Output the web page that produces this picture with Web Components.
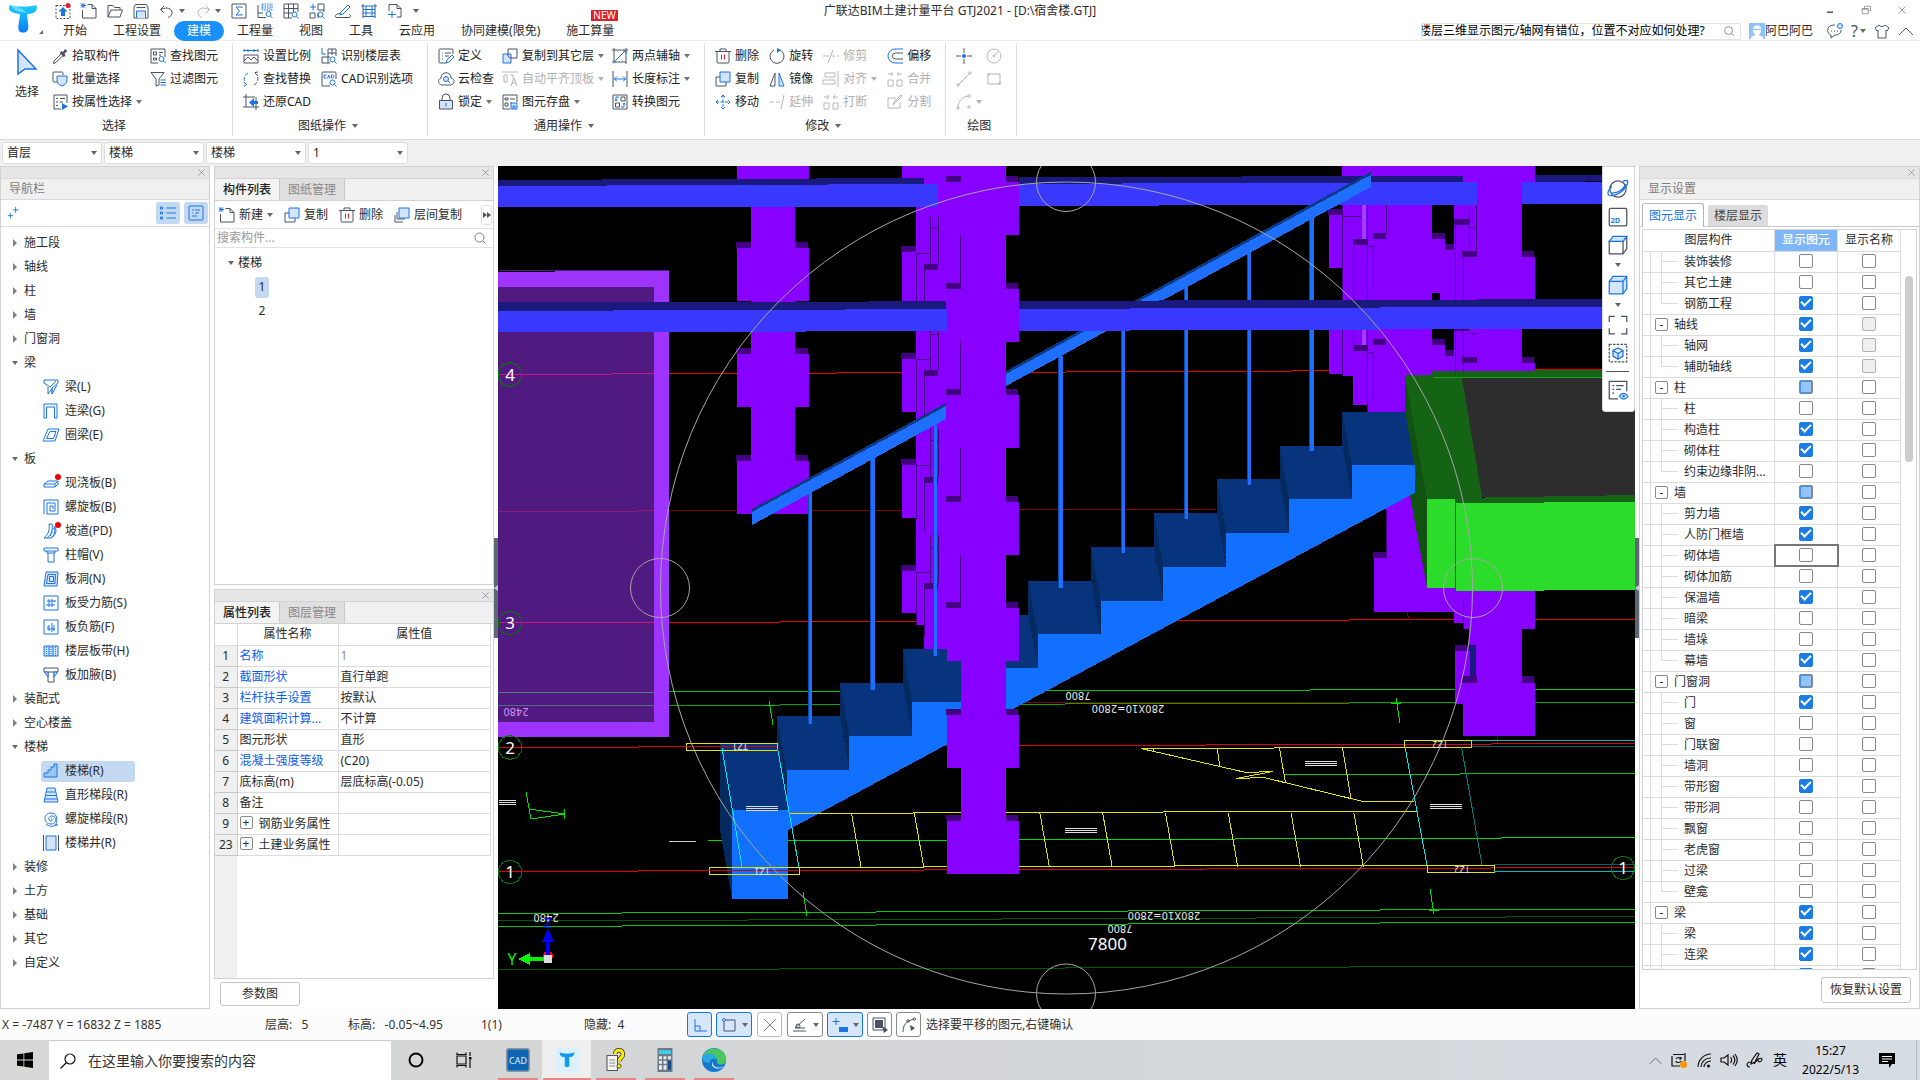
<!DOCTYPE html>
<html lang="zh-CN">
<head>
<meta charset="utf-8">
<title>广联达BIM土建计量平台 GTJ2021</title>
<style>
  html, body { height: 100%; }
  body {
    margin: 0;
    overflow: hidden;
    background: #fff;
    color: #2b2b2b;
    font: 12px/16px "Noto Sans", "Noto Sans CJK SC", sans-serif;
  }
</style>
</head>
<body>
<gtj-app></gtj-app>

<script>
// shared button / reset rules, every shadow root starts with these
const RESET = `
  * { box-sizing: border-box; }
  button, input, select { font: inherit; color: inherit; margin: 0; padding: 0; border: 0; background: none; outline: 0; }
  button { display: inline-flex; align-items: center; justify-content: center; white-space: nowrap; }
`;

// 16x16 icons: k = dark stroke, b = blue stroke, f = light fill, B = solid blue, K = solid dark
const ICONS = {
  upload: '<path class="k" stroke-dasharray="2 1.500" d="M1 2.500h14v13H1z"/><path class="B" d="M8 4l4.500 4.500H10V13H6V8.500H3.500z"/><circle cx="13" cy="2.500" r="2.500" fill="#e0202a"/>',
  newdoc: '<path class="k" d="M6.500 1.500H11l4 4v9.500H1.500V7"/><path class="k" d="M11 1.500v4h4"/><path class="b" d="M0 .500l4 4M4 .500l-4 4M2 0v5M0 2.500h5"/>',
  open: '<path class="k" d="M1 14V2.500h5l1.500 2H13V7M1 14l3-7h11.500L13 14z"/>',
  save: '<path class="k" d="M2.500 1.500h11L15 4v11H1V4zM3.500 4.500h9"/><path class="b f" d="M3.500 15V8h9v7"/>',
  undo: '<path class="k" d="M5 3L1.500 6.500L5 10M2 6.500c6-3 11-1 11 3 0 2-1 4-4 5"/>',
  redo: '<path class="g" d="M11 3l3.500 3.500L11 10M14 6.500c-6-3-11-1-11 3 0 2 1 4 4 5"/>',
  sigma: '<path class="k" d="M1 1h14v14H1z"/><path class="b" d="M11 5V4H5l3.500 4L5 12h6v-1"/>',
  tableFind: '<path class="k" d="M1 2v12.500h8M1 10h5"/><path class="b" stroke-dasharray="1.500 1" d="M5 1h10v6H5zM5 3h10M5 5h10"/><circle class="b" cx="11.500" cy="11" r="2.500"/><path class="b" d="M13.500 13l2 2"/>',
  gridFind: '<path class="k" d="M1 1h14v8M1 1v14h8M5.500 1v14M10.500 1v8M1 5.500h14M1 10h8"/><circle class="b" cx="11.500" cy="11.500" r="2.500"/><path class="b" d="M13.500 13.500l2 2"/>',
  partFind: '<path class="k" d="M9 1h6v8M9 1v6h6M1 10v5h5v-5zM9 10v5"/><path class="b" d="M1 4h6M4 1v6"/><circle class="b" cx="11.500" cy="11.500" r="2.500"/><path class="b" d="M13.500 13.500l2 2"/>',
  pencil: '<path class="k" d="M1 14.500h13c2 0 2-3 0-3M1 14.500c-2-2 1-4 4-4"/><path class="b" d="M5 12l1-3 7-7 2 2-7 7z"/>',
  ladder: '<path class="k" d="M2 1v14M14 1v14"/><path class="b" d="M0 3h16M2 6.500h12M2 10h12M2 13.500h12M5 3v11M11 3v11"/>',
  docPlus: '<path class="k" d="M2 8V1.500h8l4 4V14h-4M10 1.500v4h4"/><path class="b" d="M5 8v7M1 11.500h8"/>',
  dropper: '<path class="K" d="M9 3l2 1 2-3 2.500 2-3 2.500L13.500 8l-2 1L8 5z"/><path class="k" d="M9 6l-7 7-.500 2.500 2.500-1 7-7"/>',
  batch: '<path class="k" d="M5 11H2a1 1 0 0 1-1-1V2a1 1 0 0 1 1-1h8a1 1 0 0 1 1 1v2"/><path class="b f" d="M5 5h10v4c0 3-2 5-5 6-3-1-5-3-5-6z"/>',
  propSelect: '<path class="k" d="M9 15H2V1h13v8M4 4.500h2M8 4.500h5M4 8h2M8 8h3M4 11.500h2"/><path class="B" d="M10 9l6 3.500-6 3.500z"/>',
  findElem: '<path class="k" d="M8 15H1V1h14v8M3.500 4h3v3h-3zM3.500 10h3v2h-3zM9 4.500h4M9 7h2"/><circle class="b" cx="11.500" cy="11" r="2.500"/><path class="b" d="M13.500 13l2 2"/>',
  filter: '<path class="k" d="M1 1.500h13L9 8v6l-3 1V8z"/><path class="b" d="M10.500 9H16M10.500 11.500H16M10.500 14H16"/>',
  scale: '<path class="b" d="M1 2.500h14M1 1v3M15 1v3M5 1v3M11 1v3"/><path class="k" d="M1 7h14v8H1zM1 13l4-4 3 3 3-3 4 4"/>',
  replace: '<path class="b" stroke-dasharray="4 1.500" d="M5 2c-5 3-5 9-1 12M1 11l3 3.500L1 15"/><path class="k" stroke-dasharray="4 1.500" d="M11 14c5-3 5-9 1-12M15 1l-3 .500L15 5"/>',
  restore: '<path class="k" d="M0 3h12M3 0v13M0 13h16M13 3v13"/><path class="B" d="M11 4v3h4v3h-4v3L6 8.500z"/>',
  floorTable: '<path class="b" d="M1 0v6h4"/><path class="k" d="M7 1h8v7M7 1v14M1 15h8M1 9v6M1 9h8M11 1v6M7 5h8"/><circle class="b" cx="11.500" cy="11.500" r="2.500"/><path class="b" d="M13.500 13.500l2 2"/>',
  cadOpt: '<path class="k" d="M15 8V2a1 1 0 0 0-1-1H2a1 1 0 0 0-1 1v13h8"/><path class="b" d="M5.500 4H3v3h2.500M6.500 7.500l1.300-3.500 1.200 3.500M10.500 4v3h1c2 0 2-3 0-3z"/><circle class="b" cx="11.500" cy="11.500" r="2.500"/><path class="b" d="M13.500 13.500l2 2"/>',
  define: '<path class="k" d="M8 15H2a1 1 0 0 1-1-1V2a1 1 0 0 1 1-1h12a1 1 0 0 1 1 1v4M4 5h1M7 5h6M4 8h1M7 8h4M4 11h1"/><path class="b" d="M8 15l1-3 5-5 2 2-5 5z"/>',
  cloudCheck: '<path class="k" d="M4 14c-5-1-4-6-1-7C3 0 13 0 13 7c4 1 4 6 0 7z"/><circle class="b f" cx="8" cy="8" r="2.500"/><path class="b" d="M10 10l2 2"/>',
  lock: '<path class="k" d="M4 6V4a4 4 0 0 1 8 0v2"/><path class="k f" d="M1.500 6.500h13V15h-13z"/><path class="b" d="M8 9v3.500"/>',
  copyFloor: '<path class="b f" d="M1 6h8v9H1z"/><path class="k" fill="#fff" d="M6 1h9v9H8L6 8z"/>',
  alignTop: '<path class="g" d="M0 1h16M2 4h3v7H2zM8 4h3v4M9 15l3-8 3 8M10 12h4"/>',
  saveElem: '<path class="k" d="M8 15H1V1h14v7M3 4h3v2H3zM8 5h5M3 9h3v3H3zM8 9h2"/><path class="b f" d="M9 9h6v6H9zM11 15v-3h2v3"/>',
  twoPoint: '<path class="k" d="M0 2h16M2 0v14M0 14h14M14 0v16"/><path class="b" d="M3 13L13 3M2 15.500l2-2M11 3h3v3"/>',
  dimension: '<path class="k" d="M1 0v16M15 0v16"/><path class="b" d="M2 8h12M5 5.500L2.500 8 5 10.500M11 5.500L13.500 8 11 10.500"/>',
  convert: '<path class="k" d="M1 1h14v14H1zM3.500 9h4v4h-4zM9 3h4v4H9z"/><path class="b" d="M7 3H4v4M3 5.500L4 7l1.500-1.500M9 13h3V9M11 10.500L12 9l1.500 1.500"/>',
  trash: '<path class="k" d="M0 3.500h16M5 3V1h6v2M2 3.500V14a1 1 0 0 0 1 1h10a1 1 0 0 0 1-1V3.500"/><path class="r" d="M6.500 6.500v5M9.500 6.500v5"/>',
  copy: '<path class="k" d="M11 11v4H1V6h4"/><path class="b f" d="M5 1h10v10H5z"/>',
  move: '<path class="b" stroke-dasharray="3 1.500" d="M8 1v14M1 8h14"/><path class="b" d="M6 3l2-2 2 2M6 13l2 2 2-2M3 6L1 8l2 2M13 6l2 2-2 2"/>',
  rotate: '<path class="k" d="M5 2a7 7 0 1 0 6 0"/><path class="B" d="M8 0l4 2-4 3z"/>',
  mirror: '<path class="k" d="M6 2v13H1z"/><path class="b f" d="M10 2v13h5z"/>',
  trim: '<path class="g" d="M0 8h6M10 2L5 15M9 8h3M14 8h2"/>',
  extend: '<path class="g" d="M0 8h5M7 8h4M15 1l-3 14"/>',
  align: '<path class="g" d="M15 0v16M2 2h10v4H2zM0 9h12v4H0z"/>',
  breakUp: '<path class="g" d="M1 9h5v6H1zM10 9h5v6h-5zM1 3h5M4 1l2 2-2 2M15 3h-5M12 1l-2 2 2 2"/>',
  offset: '<path class="b" d="M16 1H8a6.500 6.500 0 0 0 0 14h8"/><path class="k" d="M16 5H8.500a3 3 0 0 0 0 6H16"/>',
  merge: '<path class="g" d="M1 9h5v6H1zM10 9h5v6h-5zM1 3h4M5 1v4M15 3h-4M11 1v4"/>',
  split: '<path class="g" d="M9 4H1v10h12V9M6 11l1-3 7-7 1 1-7 7z"/>',
  point: '<path class="k" d="M8 0v5M8 11v5M0 8h5M11 8h5"/><circle class="B" cx="8" cy="8" r="2"/>',
  circle: '<circle class="g" cx="8" cy="8" r="7"/><path class="g" d="M8 8l4-4"/><circle class="g" cx="8" cy="8" r="1"/>',
  line: '<path class="g" d="M2 14L14 2"/><circle class="g" cx="2" cy="14" r="1.200"/><circle class="g" cx="14" cy="2" r="1.200"/>',
  rect: '<path class="g" d="M2 3h12v10H2z"/><circle class="g" cx="2.500" cy="3.500" r="1"/><circle class="g" cx="13.500" cy="12.500" r="1"/>',
  arc: '<path class="g" d="M2 14C2 7 6 3 12 2"/><circle class="g" cx="2" cy="14" r="1.200"/><circle class="g" cx="13" cy="2" r="1.200"/><circle class="g" cx="13" cy="13" r="1.200"/>',
  search: '<circle class="n" cx="7.500" cy="7.500" r="4.500"/><path class="n" d="M11 11l2.500 2.500"/>',
  chat: '<path class="k" d="M8 2C2 2 0 5 1 9c1 2 2 3 3 3v3l4-3c4 0 6-2 6-5"/><path class="k" d="M4 8h1M7 8h1M10 8h1"/><circle class="b f" cx="13" cy="3" r="2.500"/>',
  shirt: '<path class="k" d="M5 2L1 5l2 3 1-1v8h8V7l1 1 2-3-4-3C10 4 6 4 5 2z"/>',
  up: '<path class="k" d="M1 12l7-7 7 7"/>',
  close: '<path class="n" d="M3.500 3.500l9 9M12.500 3.500l-9 9"/>',
  min: '<path class="w" d="M4 11h8"/>',
  max: '<path class="n" d="M6 6V3h8v6h-3M3 6h8v7H3zM3 7h8"/>',
  plus: '<path class="b" d="M11 1v7M7.500 4.500h7M5 8v6M2 11h6"/>',
  listView: '<path class="b" d="M6.500 3H16M6.500 8H16M6.500 13H16M.500 2h2v2h-2zM.500 7h2v2h-2zM.500 12h2v2h-2z"/>',
  cardView: '<path class="b" d="M2 1h12a1 1 0 0 1 1 1v12a1 1 0 0 1-1 1H2a1 1 0 0 1-1-1V2a1 1 0 0 1 1-1zM4 5h2M7 5h5M4 8h1M7 8h4M4 11h5"/>',
  floorCopy: '<path class="k" d="M3 5v7h8M1 8v7h8"/><path class="b f" d="M5 1h10v10H5z"/>',
  beam: '<path class="b" d="M1 1h14v3L9 9v6M1 1v3l6 4 6-6M5 8v7M9 9v6l5-9M5 15l3-4"/>',
  linkBeam: '<path class="b" d="M1 15V1h13v14h-2.500V4h-8v11z"/>',
  ringBeam: '<path class="b" d="M5 2h11l-4 12H0zM7 4.500h6L10.500 11.500H3.500z"/>',
  slab: '<path class="b" d="M1 9l4-3h10v3l-3 3H1zM1 9h11l3-3M12 9v3"/><circle cx="15" cy="2" r="3" fill="#f00000"/>',
  spiralSlab: '<path class="b" d="M1 1h14v14H4M1 1v14M4 15V4h8v8H7V7h3v3"/>',
  ramp: '<path class="b" d="M6 1h3c1 6-1 12-5 14H1c4-3 6-8 5-14zM11 3c2 5 0 10-3 12H4M12 4c2 4 1 8-4 11"/><path class="b" stroke-dasharray="2 1.500" d="M10 5c0 4-1 6-4 9"/><circle cx="15" cy="2" r="3" fill="#f00000"/>',
  cap: '<path class="b" d="M1 1h14v3H1zM4 4v2h8V4M5 6v9h6V6"/>',
  hole: '<path class="b f" d="M3 1h12l-1 14H1zM5 3.500h7.500L12 12.500H3.500zM6.500 5.500h4v5h-4z"/>',
  rebarS: '<path class="b" d="M1 1h14v14H1zM4 6h8M3 10h9M6 4v8M9 4v8M12 5v2"/>',
  rebarF: '<path class="b" d="M1 1h14v14H1zM4 10h8M6 6v6M9 4v9M11 6v6M4 8h2"/>',
  strip: '<path class="b f" d="M1 3h14v10H1z"/><path class="b" d="M6 3v10M10 3v10"/><path class="b" stroke-dasharray="1 1" d="M3.500 4v9M8 4v9M12.500 4v9"/>',
  haunch: '<path class="k" d="M1 1h14v4H1zM5 5v10h6V5"/><path class="b f" d="M1.500 5H5v5zM14.500 5H11v5z"/>',
  stair: '<path class="b s" d="M1 14v-4h4V7h3V4h3V1h3v13z"/>',
  ladderStair: '<path class="b f" d="M4 1h8l3 14H1zM3.500 5h9M3 8.500h10M2 12h12"/>',
  spiral: '<path class="b" d="M8 8c1-1 2 1 0 2-3 0-3-5 1-5 5 0 5 8-1 8C0 13 0 2 8 2c7 0 7 9 4 12h3M3 13c3 3 8 3 11 0"/>',
  well: '<path class="k" d="M.500 0v16M15.500 0v16"/><path class="b f" d="M3 1h10v14H3z"/>',
  orbit: '<circle class="k" cx="8" cy="8" r="6.500"/><path class="b" d="M3 6C0 9-1 12 1 13c3 1 8-1 11-4s5-7 3-8c-1 0-2 0-3 1M14 4c-1 4-7 8-11 7"/>',
  view2d: '<rect class="k" x="1" y="1" width="14" height="14" rx="1"/><text x="2" y="13" font-size="6" font-weight="700" fill="#1e7be0">2D</text>',
  cubeTop: '<path class="k" d="M1 5h11v10H1zM12 15l3-4V1M12 5l3-4"/><path class="b f" d="M1 5l3-4h11l-3 4z"/>',
  cube: '<path class="b f" d="M1 5l3-4h11v10l-3 4H1zM1 5h11v10M12 5l3-4"/>',
  fit: '<path class="k" d="M5.500 1H1v4.500M10.500 1H15v4.500M5.500 15H1v-4.500M10.500 15H15v-4.500"/>',
  isolate: '<path class="k" stroke-dasharray="2 1" d="M1 1h14v14H1z"/><path class="b f" d="M8 4l4 2v4.500L8 13l-4-2.500V6zM4 6l4 2.500L12 6M8 8.500V13"/>',
  listEye: '<path class="k" d="M8 15H1V1h14v8M3.500 4.500H5M6.500 4.500h6M3.500 7.500H5M6.500 7.500h4M3.500 10.500H5"/><path class="b f" d="M9 13c2-3 5-3 7 0-2 3-5 3-7 0z"/><circle class="B" cx="12.500" cy="13" r="1"/>',
  ortho: '<path class="b" d="M3 2v12h12M3 9h5v5"/>',
  snap: '<path class="k" d="M4 3h10v11H3V5"/><circle class="b f" cx="3" cy="3" r="1.500"/>',
  cross: '<path class="n" d="M2 2l12 12M14 2L2 14"/>',
  angle: '<path class="k" d="M13 2L3 11h10M1 14h13"/><circle class="k" cx="6" cy="9" r="2"/>',
  dynamic: '<path class="b" d="M4 1v7M.500 4.500h7"/><path class="B" d="M7 10h9v5H7z"/>',
  select: '<path class="k" d="M1 1h12v12H1z"/><path class="K" d="M3 3h8v8H3zM10 9l6 4-4 3z"/>',
  curve: '<path class="k" d="M2 15C2 8 5 4 13 2"/><circle class="k" cx="7" cy="4" r="1.200"/><circle class="k" cx="13.500" cy="2" r="1.200"/><path class="K" d="M9 8l5 3-4 3z"/>',
  win: '<path fill="#000" d="M0 2.300L6.500 1.400V7.600H0zM7.300 1.300L16 0v7.600H7.300zM0 8.400h6.500v6.200L0 13.700zM7.300 8.400H16V16l-8.700-1.300z"/>',
  find: '<circle class="t" cx="10" cy="6" r="5"/><path class="t" d="M6.500 9.500L.500 15.500"/>',
  cortana: '<circle cx="8" cy="8" r="6.500" fill="none" stroke="#000" stroke-width="2"/>',
  taskview: '<path class="t" d="M1 4h9v8H1zM1 .500v2h9v-2M1 15.500v-2h9v2M14 0v4M14 8v8"/><path fill="#000" d="M13 5h2.500v2.500H13z"/>',
  cad: '<rect width="16" height="16" rx="2" fill="#8c959d"/><rect x="1" y="1" width="14" height="14" rx="1" fill="#0d66b5"/><text x="2" y="10.500" font-size="6" fill="#dfefff">CAD</text>',
  tapp: '<rect width="16" height="16" rx="2" fill="#dcf1ff"/><path fill="#129af0" d="M3 3c3 1 7 1 10 0-.500 3-2 3-3.500 3v6c0 1-3 1-3 0V6C5 6 3.500 6 3 3z"/>',
  help: '<path fill="#f5f5f5" stroke="#555" stroke-width=".700" d="M2 5h7v10H2z"/><path stroke="#888" stroke-width=".800" d="M3.500 8h4M3.500 10h4M3.500 12h4"/><path fill="none" stroke="#333" stroke-width="3" d="M7.500 4c0-4 6-3 5 1-1 2-2.500 2-2.500 4"/><path fill="none" stroke="#ffee00" stroke-width="2" d="M7.500 4c0-4 6-3 5 1-1 2-2.500 2-2.500 4"/><circle cx="10" cy="12" r="1.400" fill="#fe0" stroke="#333" stroke-width=".500"/>',
  calc: '<path fill="#6d7a86" d="M3 0h10v16H3z"/><path fill="#42cdf0" d="M4 1.500h8V4H4z"/><path fill="#e6ebee" d="M4 5.500h2v2H4zM7 5.500h2v2H7zM4 8.500h2v2H4zM7 8.500h2v2H7zM4 11.500h2v3H4zM7 11.500h2v3H7zM10 5.500h2v2h-2z"/><path fill="#134a8e" d="M10 8.500h2v6h-2z"/>',
  edge: '<circle cx="8" cy="8" r="8" fill="#1478cf"/><path fill="#4ac85f" d="M1 5C4-2 16-1 16 8c0 3-4 4-6 2 1-4-3-7-9-5z"/><path fill="#2aa8e0" d="M.500 6C3 2 9 3 9.500 8 7 6 5 8 5 10c-3 0-5-2-4.500-4z"/><path fill="#dcebf5" d="M7 9c0 4 4 5 8 3-3 3-10 2-8-3z"/>',
  update: '<path class="t" d="M2 2.500h11M1 4v10h8M14 1v8"/><path class="t" d="M5 7c1-2 5-2 5 0M10 9c-1 2-5 2-5 0M10 5v2H8"/><circle cx="12.500" cy="12.500" r="3.500" fill="#ff9400"/>',
  wifi: '<path class="t" d="M2 15C2 8 8 2 15 2M5 15c0-5 4-9 10-9M8 15c0-3 3-6 7-6"/><circle cx="12.500" cy="14" r="1.500"/>',
  sound: '<path class="t" d="M0 6h3l4-3v10l-4-3H0zM9.500 5c1.500 2 1.500 4 0 6M12 3.500c2.500 3 2.500 6 0 9M14 2c3 4 3 8 0 12"/>',
  pen: '<path class="t" d="M5 12l1-4 5-7 2 1-4 8zM5 10c-5 0-5 5-1 5M8 12c3-5 7-7 8-5 0 3-4 4-4 1"/>',
  notice: '<path fill="#000" d="M0 1h16v11h-3l-3 4v-4H0z"/><path stroke="#fff" stroke-width="1.200" d="M3 4.500h10M3 7h10M3 9.500h6"/>'
};

class UiIcon extends HTMLElement {
  constructor() {
    super();
    this.attachShadow({ mode: 'open' });
  }
  connectedCallback() {
    this.shadowRoot.innerHTML = `
      <style>
        :host { display: inline-block; flex: none; width: 16px; height: 16px; }
        svg { display: block; width: 100%; height: 100%; overflow: visible; font-family: "Noto Sans", sans-serif; }
        .k, .b, .g, .r, .n, .w, .t { fill: none; stroke-width: 1; }
        .k { stroke: #4b5263; } .b { stroke: #1b74e4; } .g { stroke: #b6b6b6; }
        .r { stroke: #e02020; } .n { stroke: #808080; } .w { stroke: #555; stroke-width: 2; } .t { stroke: #111; stroke-width: 1.2; }
        .f { fill: #d3e4fb; } .s { fill: #9cc6f2; } .B { fill: #1b74e4; } .K { fill: #4b5263; }
      </style>
      <svg viewBox="0 0 16 16" aria-hidden="true">${ICONS[this.getAttribute('name')] || ''}</svg>`;
  }
}
customElements.define('ui-icon', UiIcon);

class UiCaret extends HTMLElement {
  constructor() {
    super();
    this.attachShadow({ mode: 'open' }).innerHTML = `
      <style>
        :host { display: inline-block; flex: none; border: 3px solid transparent; border-top: 4px solid #666; border-bottom: 0; width: 0; height: 0; }
        :host([dir=right]) { border: 4px solid transparent; border-left: 4px solid #808080; border-right: 0; }
      </style>`;
  }
}
customElements.define('ui-caret', UiCaret);

// one ribbon command: icon, text, optional drop arrow
class RbCmd extends HTMLElement {
  constructor() {
    super();
    this.attachShadow({ mode: 'open' });
  }
  connectedCallback() {
    const off = this.hasAttribute('off');
    this.shadowRoot.innerHTML = `
      <style>${RESET}
        :host { display: block; height: 23px; }
        button { height: 23px; gap: 4px; color: ${off ? '#b0b0b0' : '#222'}; }
        ui-caret { opacity: ${off ? .5 : .9}; }
      </style>
      <button type="button"${off ? ' disabled' : ''} aria-label="${this.getAttribute('icon')}">
        <ui-icon name="${this.getAttribute('icon')}"></ui-icon><slot></slot>${this.hasAttribute('drop') ? '<ui-caret></ui-caret>' : ''}
      </button>`;
    if (this.textContent.trim()) this.shadowRoot.querySelector('button').removeAttribute('aria-label');
  }
}
customElements.define('rb-cmd', RbCmd);

class RbGroup extends HTMLElement {
  constructor() {
    super();
    this.attachShadow({ mode: 'open' });
  }
  connectedCallback() {
    this.shadowRoot.innerHTML = `
      <style>
        :host { display: flex; flex-direction: column; padding: 1px 14px 0 10px; border-right: 1px solid #dcdcdc; height: 93px; box-sizing: border-box; }
        .cols { display: flex; gap: var(--gap, 10px); height: 74px; }
        .label { display: flex; justify-content: center; align-items: center; gap: 6px; height: 16px; }
      </style>
      <div class="cols"><slot></slot></div>
      <div class="label">${this.getAttribute('label')}${this.hasAttribute('drop') ? '<ui-caret></ui-caret>' : ''}</div>`;
  }
}
customElements.define('rb-group', RbGroup);

class AppHeader extends HTMLElement {
  constructor() {
    super();
    const qat = ['upload', 'newdoc', 'open', 'save', 'undo*', 'redo*', 'sigma', 'tableFind', 'gridFind', 'partFind', 'pencil', 'ladder', 'docPlus'];
    const tabs = ['开始', '工程设置', '建模', '工程量', '视图', '工具', '云应用', '协同建模(限免)', '施工算量'];
    this.attachShadow({ mode: 'open' }).innerHTML = `
      <style>${RESET}
        :host { display: grid; grid-template: 21px 20px / 50px 1fr auto 1fr 50px; border-bottom: 1px solid #ededed; height: 41px; box-sizing: border-box; background: #fff; }
        .logo { grid-row: 1 / 3; display: flex; align-items: end; padding: 0 0 7px 8px; gap: 1px; }
        .logo svg { width: 30px; height: 30px; }
        .logo i { border-left: 4px solid transparent; border-bottom: 4px solid #666; }
        .qat { display: flex; align-items: center; gap: 10px; padding-left: 5px; }
        .qat button { gap: 4px; }
        .qat ui-caret { width: 0; }
        .title { align-self: center; }
        .win { grid-column: 4 / 6; justify-self: end; display: flex; }
        .win button { width: 36px; height: 20px; }
        .win ui-icon { width: 12px; height: 12px; }
        .row { grid-column: 2 / 6; display: flex; justify-content: space-between; }
        nav { display: flex; }
        nav button { position: relative; padding: 0 13px; height: 20px; }
        nav .on { background: #1890ff; color: #fff; border-radius: 10px; }
        .new { position: absolute; left: 38px; bottom: 20px; padding: 0 2px; background: #e0202a; color: #fff; font-size: 10px; line-height: 11px; }
        .tools { display: flex; align-items: center; gap: 8px; padding-right: 6px; }
        .box { display: flex; align-items: center; width: 320px; height: 17px; border: 1px solid #e2e2e2; border-radius: 2px; padding-right: 4px; }
        .box input { flex: 1; min-width: 0; height: 15px; text-indent: -3px; color: #000; }
        .box ui-icon { width: 14px; height: 14px; }
        .user { display: flex; align-items: center; margin-right: 6px; }
        .user svg { width: 16px; height: 16px; }
        .q { font-size: 16px; gap: 2px; color: #4b5263; }
      </style>
      <div class="logo">
        <svg viewBox="0 0 30 30"><defs><linearGradient id="t" x2="0" y2="1"><stop stop-color="#1ad0fb"/><stop offset="1" stop-color="#0b7df2"/></linearGradient></defs>
          <path fill="url(#t)" d="M2 1c5 2 20 2 26 0 3 6-2 9-9 9 0 5 3 14 0 17-2 2-6 2-8 0-2-4 1-12 1-17C7 9-2 8 2 1z"/>
          <path fill="#9be6ff" opacity=".6" d="M3 1c6 2 12 3 16 8-8-1-13-2-16-8z"/></svg><i></i>
      </div>
      <div class="qat">${qat.map(n => `<button type="button" aria-label="${n.replace('*', '')}"><ui-icon name="${n.replace('*', '')}"></ui-icon>${n.endsWith('*') ? '<ui-caret></ui-caret>' : ''}</button>`).join('')}<ui-caret></ui-caret></div>
      <div class="title">广联达BIM土建计量平台 GTJ2021 - [D:\\宿舍楼.GTJ]</div>
      <div class="win">${['min', 'max', 'close'].map(n => `<button type="button" aria-label="${n}"><ui-icon name="${n}"></ui-icon></button>`).join('')}</div>
      <div class="row">
        <nav>${tabs.map((t, i) => `<button type="button"${i === 2 ? ' class="on"' : ''}>${t}${i === 8 ? '<span class="new">NEW</span>' : ''}</button>`).join('')}</nav>
        <div class="tools">
          <div class="box"><input type="text" aria-label="搜索" value="楼层三维显示图元/轴网有错位，位置不对应如何处理?"><ui-icon name="search"></ui-icon></div>
          <div class="user"><svg viewBox="0 0 16 16"><path fill="#8cc4fb" d="M0 0h16v16H0z"/><path fill="#fff" d="M4 6c0-5 8-5 8 0v1c0 4-2 4-2 5l4 2v2H2v-2l4-2c0-1-2-1-2-5z"/><path stroke="#8cc4fb" d="M3 6.500h10"/></svg>阿巴阿巴</div>
          <ui-icon name="chat"></ui-icon>
          <button type="button" class="q">?<ui-caret></ui-caret></button>
          <ui-icon name="shirt"></ui-icon>
          <ui-icon name="up"></ui-icon>
        </div>
      </div>`;
  }
}
customElements.define('app-header', AppHeader);

class AppRibbon extends HTMLElement {
  constructor() {
    super();
    this.attachShadow({ mode: 'open' }).innerHTML = `
      <style>${RESET}
        :host { display: flex; padding-top: 2px; height: 99px; box-sizing: border-box; border-bottom: 1px solid #d8d8d8; background: #fff; }
        .big { flex-direction: column; width: 34px; gap: 8px; height: 60px; }
        .big svg { width: 22px; height: 28px; }
      </style>
      <rb-group label="选择" style="--gap: 8px">
        <button type="button" class="big"><svg viewBox="0 0 22 28"><path d="M2 2l18 19H9l-7 5z" fill="#d3e4fb" stroke="#1b74e4" stroke-width="1.500"/></svg>选择</button>
        <div><rb-cmd icon="dropper">拾取构件</rb-cmd><rb-cmd icon="batch">批量选择</rb-cmd><rb-cmd icon="propSelect" drop>按属性选择</rb-cmd></div>
        <div><rb-cmd icon="findElem">查找图元</rb-cmd><rb-cmd icon="filter">过滤图元</rb-cmd></div>
      </rb-group>
      <rb-group label="图纸操作" drop>
        <div><rb-cmd icon="scale">设置比例</rb-cmd><rb-cmd icon="replace">查找替换</rb-cmd><rb-cmd icon="restore">还原CAD</rb-cmd></div>
        <div><rb-cmd icon="floorTable">识别楼层表</rb-cmd><rb-cmd icon="cadOpt">CAD识别选项</rb-cmd></div>
      </rb-group>
      <rb-group label="通用操作" drop style="--gap: 8px">
        <div><rb-cmd icon="define">定义</rb-cmd><rb-cmd icon="cloudCheck">云检查</rb-cmd><rb-cmd icon="lock" drop>锁定</rb-cmd></div>
        <div><rb-cmd icon="copyFloor" drop>复制到其它层</rb-cmd><rb-cmd icon="alignTop" drop off>自动平齐顶板</rb-cmd><rb-cmd icon="saveElem" drop>图元存盘</rb-cmd></div>
        <div><rb-cmd icon="twoPoint" drop>两点辅轴</rb-cmd><rb-cmd icon="dimension" drop>长度标注</rb-cmd><rb-cmd icon="convert">转换图元</rb-cmd></div>
      </rb-group>
      <rb-group label="修改" drop>
        <div><rb-cmd icon="trash">删除</rb-cmd><rb-cmd icon="copy">复制</rb-cmd><rb-cmd icon="move">移动</rb-cmd></div>
        <div><rb-cmd icon="rotate">旋转</rb-cmd><rb-cmd icon="mirror">镜像</rb-cmd><rb-cmd icon="extend" off>延伸</rb-cmd></div>
        <div><rb-cmd icon="trim" off>修剪</rb-cmd><rb-cmd icon="align" drop off>对齐</rb-cmd><rb-cmd icon="breakUp" off>打断</rb-cmd></div>
        <div><rb-cmd icon="offset">偏移</rb-cmd><rb-cmd icon="merge" off>合并</rb-cmd><rb-cmd icon="split" off>分割</rb-cmd></div>
      </rb-group>
      <rb-group label="绘图" style="--gap: 4px">
        <div><rb-cmd icon="point"></rb-cmd><rb-cmd icon="line" off></rb-cmd><rb-cmd icon="arc" drop off></rb-cmd></div>
        <div><rb-cmd icon="circle" off></rb-cmd><rb-cmd icon="rect" off></rb-cmd></div>
      </rb-group>`;
  }
}
customElements.define('app-ribbon', AppRibbon);

class FloorBar extends HTMLElement {
  constructor() {
    super();
    const items = [['楼层', '首层'], ['构件大类', '楼梯'], ['构件类型', '楼梯'], ['构件', '1']];
    this.attachShadow({ mode: 'open' }).innerHTML = `
      <style>${RESET}
        :host { display: flex; gap: 2px; padding: 1px 2px; height: 26px; box-sizing: border-box; background: #f0f0f0; }
        label { display: grid; align-items: center; width: 100px; }
        select { grid-area: 1 / 1; appearance: none; width: 100px; height: 22px; padding-left: 4px; background: #fff; border: 1px solid #dcdcdc; border-radius: 3px; }
        ui-caret { grid-area: 1 / 1; justify-self: end; margin-right: 5px; pointer-events: none; }
      </style>
      ${items.map(([n, v]) => `<label><select aria-label="${n}"><option>${v}</option></select><ui-caret></ui-caret></label>`).join('')}`;
  }
}
customElements.define('floor-bar', FloorBar);

// docked panel: grip strip with close button, then heading or tabs
class DockPanel extends HTMLElement {
  constructor() {
    super();
    this.attachShadow({ mode: 'open' });
  }
  connectedCallback() {
    const tabs = (this.getAttribute('tabs') || '').split(',').filter(Boolean);
    const head = tabs.length
      ? `<div class="tabs">${tabs.map((t, i) => `<button type="button"${i ? '' : ' class="on"'}>${t}</button>`).join('')}</div>`
      : `<div class="head">${this.getAttribute('heading')}</div>`;
    this.shadowRoot.innerHTML = `
      <style>${RESET}
        :host { display: flex; flex-direction: column; min-height: 0; box-sizing: border-box; border: 1px solid #d2d2d2; background: #fff; }
        .grip { display: flex; justify-content: end; height: 11px; background: #e6e6e6; padding-right: 2px; }
        .grip button { width: 11px; height: 11px; }
        .grip ui-icon { width: 11px; height: 11px; }
        .head { height: 22px; line-height: 20px; padding-left: 8px; background: #f0f0f0; border: 1px solid #dadada; border-width: 1px 0; color: #7c7c7c; }
        .tabs { display: flex; height: 23px; background: #f0f0f0; border: 1px solid #d2d2d2; border-width: 1px 0; }
        .tabs button { padding: 0 8px; border-right: 1px solid #c8c8c8; background: #dfdfdf; color: #888; }
        .tabs .on { background: #f3f3f3; color: #222; font-weight: 500; }
      </style>
      <div class="grip"><button type="button" aria-label="关闭"><ui-icon name="close"></ui-icon></button></div>
      ${head}
      <slot></slot>`;
  }
}
customElements.define('dock-panel', DockPanel);

class NavTree extends HTMLElement {
  constructor() {
    super();
    const tree = [
      ['施工段'], ['轴线'], ['柱'], ['墙'], ['门窗洞'],
      ['梁', [['beam', '梁(L)'], ['linkBeam', '连梁(G)'], ['ringBeam', '圈梁(E)']]],
      ['板', [['slab', '现浇板(B)'], ['spiralSlab', '螺旋板(B)'], ['ramp', '坡道(PD)'], ['cap', '柱帽(V)'], ['hole', '板洞(N)'],
        ['rebarS', '板受力筋(S)'], ['rebarF', '板负筋(F)'], ['strip', '楼层板带(H)'], ['haunch', '板加腋(B)']]],
      ['装配式'], ['空心楼盖'],
      ['楼梯', [['stair', '楼梯(R)', 1], ['ladderStair', '直形梯段(R)'], ['spiral', '螺旋梯段(R)'], ['well', '楼梯井(R)']]],
      ['装修'], ['土方'], ['基础'], ['其它'], ['自定义']
    ];
    this.attachShadow({ mode: 'open' }).innerHTML = `
      <style>${RESET}
        :host { display: block; flex: 1; min-height: 0; overflow: hidden; }
        .bar { display: flex; align-items: center; gap: 4px; height: 27px; padding: 0 1px 0 5px; border-bottom: 1px solid #dadada; }
        .bar button { width: 24px; height: 22px; border-radius: 3px; background: #c2d9f1; }
        .bar .add { width: 14px; margin-right: auto; background: none; }
        .add ui-icon { width: 14px; height: 14px; }
        ul { list-style: none; margin: 0; padding: 0; }
        .root { padding-top: 4px; }
        .g { display: flex; align-items: center; gap: 6px; height: 24px; padding-left: 11px; }
        .g span { display: flex; justify-content: center; width: 6px; }
        .c { display: flex; align-items: center; height: 24px; padding-left: 40px; }
        .c button { gap: 6px; height: 21px; padding: 0 4px 0 2px; border-radius: 3px; justify-content: start; }
        .c .on { background: #c2d9f1; width: 94px; }
      </style>
      <div class="bar"><button type="button" class="add" aria-label="添加"><ui-icon name="plus"></ui-icon></button>
        <button type="button" aria-label="列表"><ui-icon name="listView"></ui-icon></button><button type="button" aria-label="卡片"><ui-icon name="cardView"></ui-icon></button></div>
      <ul class="root">${tree.map(([name, kids]) => `
        <li><div class="g"><span><ui-caret${kids ? '' : ' dir="right"'}></ui-caret></span>${name}</div>
        ${kids ? `<ul>${kids.map(([ic, t, on]) => `<li class="c"><button type="button"${on ? ' class="on"' : ''}><ui-icon name="${ic}"></ui-icon>${t}</button></li>`).join('')}</ul>` : ''}</li>`).join('')}
      </ul>`;
  }
}
customElements.define('nav-tree', NavTree);

class MemberList extends HTMLElement {
  constructor() {
    super();
    this.attachShadow({ mode: 'open' }).innerHTML = `
      <style>${RESET}
        :host { display: block; flex: 1; min-height: 0; }
        .bar { display: flex; align-items: center; gap: 11px; height: 28px; padding: 0 1px 0 4px; border-bottom: 1px solid #e2e2e2; }
        .bar button { gap: 4px; }
        .bar .more { margin-left: auto; width: 11px; height: 20px; border: 1px solid #e2e2e2; border-radius: 3px; gap: 0; }
        .more ui-caret { border-width: 3px 0 3px 4px; border-style: solid; border-color: transparent transparent transparent #555; }
        .find { display: flex; align-items: center; height: 19px; padding: 0 5px 0 2px; border-bottom: 1px solid #e2e2e2; }
        .find input { flex: 1; }
        input::placeholder { color: #999; opacity: 1; }
        ul { list-style: none; margin: 0; padding: 3px 0 0; }
        li { display: flex; align-items: center; gap: 4px; height: 24px; padding-left: 13px; }
        .leaf { padding-left: 40px; }
        .leaf button { width: 14px; height: 21px; border-radius: 3px; }
        .on { background: #c2d9f1; }
      </style>
      <div class="bar">
        <button type="button"><ui-icon name="newdoc"></ui-icon>新建<ui-caret></ui-caret></button>
        <button type="button"><ui-icon name="copy"></ui-icon>复制</button>
        <button type="button"><ui-icon name="trash"></ui-icon>删除</button>
        <button type="button"><ui-icon name="floorCopy"></ui-icon>层间复制</button>
        <button type="button" class="more" aria-label="更多"><ui-caret></ui-caret><ui-caret></ui-caret></button>
      </div>
      <div class="find"><input type="text" aria-label="搜索构件" placeholder="搜索构件..."><ui-icon name="search"></ui-icon></div>
      <ul><li><ui-caret></ui-caret>楼梯</li><li class="leaf"><button type="button" class="on">1</button></li><li class="leaf"><button type="button">2</button></li></ul>`;
  }
}
customElements.define('member-list', MemberList);

class PropTable extends HTMLElement {
  constructor() {
    super();
    const rows = [
      [1, '名称', '1', 'l m'], [2, '截面形状', '直行单跑', 'l'], [3, '栏杆扶手设置', '按默认', 'l'], [4, '建筑面积计算...', '不计算', 'l'],
      [5, '图元形状', '直形', ''], [6, '混凝土强度等级', '(C20)', 'l'], [7, '底标高(m)', '层底标高(-0.05)', ''], [8, '备注', '', ''],
      [9, '<i>+</i>钢筋业务属性', '', ''], [23, '<i>+</i>土建业务属性', '', '']
    ];
    this.attachShadow({ mode: 'open' }).innerHTML = `
      <style>${RESET}
        :host { display: block; flex: 1; background: linear-gradient(90deg, #f0f0f0 22px, #fff 22px); }
        table { width: calc(100% - 2px); border-collapse: collapse; table-layout: fixed; }
        th { height: 21px; padding: 0; font-weight: 400; background: #fff; border: 1px solid #dcdcdc; border-top: 0; }
        th:first-child, td:first-child { width: 22px; border-left: 0; }
        td:first-child { background: #f0f0f0; border-color: #c8c8c8; text-align: center; padding: 0; }
        td { height: 21px; padding: 0 3px 0 2px; border: 1px solid #dcdcdc; background: #fff; white-space: nowrap; overflow: hidden; }
        .l td:nth-child(2) { color: #0f5df0; }
        .m td:nth-child(3) { color: #909090; }
        i { display: inline-flex; align-items: center; justify-content: center; width: 13px; height: 13px; margin: 0 6px 0 0; border: 1px solid #888; border-radius: 2px; font-style: normal; line-height: 10px; vertical-align: 1px; }
      </style>
      <table><colgroup><col style="width: 22px"><col style="width: 101px"><col></colgroup>
        <tr><th></th><th>属性名称</th><th>属性值</th></tr>
        ${rows.map(([n, a, b, c]) => `<tr class="${c}"><td>${n}</td><td>${a}</td><td>${b}</td></tr>`).join('')}
      </table>`;
  }
}
customElements.define('prop-table', PropTable);

class DisplaySettings extends HTMLElement {
  constructor() {
    super();
    // name, level (g = group, c = child, e = last child), element state, name state
    const rows = `装饰装修 c 0;其它土建 c 0;钢筋工程 e 1;轴线 g 1 d;轴网 c 1 d;辅助轴线 e 1 d;柱 g p;柱 c 0;构造柱 c 1;砌体柱 c 1;约束边缘非阴... e 0;墙 g p;剪力墙 c 1;人防门框墙 c 1;砌体墙 c f;砌体加筋 c 0;保温墙 c 1;暗梁 c 0;墙垛 c 0;幕墙 e 1;门窗洞 g p;门 c 1;窗 c 0;门联窗 c 0;墙洞 c 0;带形窗 c 1;带形洞 c 0;飘窗 c 0;老虎窗 c 0;过梁 c 0;壁龛 e 0;梁 g 1;梁 c 1;连梁 c 1; c 1`
      .split(';').map(r => r.split(' '));
    this.attachShadow({ mode: 'open' }).innerHTML = `
      <style>${RESET}
        :host { display: flex; flex-direction: column; flex: 1; min-height: 0; }
        .tabs { display: flex; align-items: end; gap: 4px; height: 27px; padding-left: 2px; border-bottom: 1px solid #c8c8c8; }
        .tabs button { height: 21px; padding: 0 6px; background: #dcdcdc; color: #444; border-radius: 3px 3px 0 0; }
        .tabs .on { height: 24px; margin-bottom: -1px; background: #fff; color: #1b74e4; border: 1px solid #b8b8b8; border-bottom: 0; }
        .view { flex: 1; min-height: 0; display: flex; margin: 2px 2px 0; border: 1px solid #d2d2d2; overflow: hidden; }
        table { flex: 1; align-self: start; border-collapse: collapse; table-layout: fixed; }
        th { height: 21px; padding: 0; font-weight: 400; border: 1px solid #dcdcdc; border-top: 0; }
        th.hot { background: #7fb6f8; color: #fff; font-weight: 500; }
        td { height: 21px; padding: 0; border: 1px solid #dcdcdc; text-align: center; }
        th:first-child, td:first-child { border-left: 0; }
        .name { display: flex; align-items: center; height: 20px; padding-left: 7px; }
        .name::before { content: ""; flex: none; align-self: stretch; width: 10px; border-left: 1px solid #dcdcdc; }
        .g .name button { flex: none; width: 13px; height: 13px; margin: 0 6px 0 -6px; border: 1px solid #888; border-radius: 2px; line-height: 8px; background: #fff; }
        .tw { flex: none; width: 17px; height: 20px; margin-right: 6px; background: linear-gradient(#dcdcdc, #dcdcdc) 0 9px / 100% 1px no-repeat; border-left: 1px solid #dcdcdc; }
        .e .tw { border: 0; background: linear-gradient(#dcdcdc, #dcdcdc) 0 9px / 100% 1px no-repeat, linear-gradient(#dcdcdc, #dcdcdc) 0 0 / 1px 10px no-repeat; }
        input { appearance: none; display: inline-grid; place-items: center; width: 14px; height: 14px; border: 1px solid #888; border-radius: 2px; background: #fff; vertical-align: top; }
        input:checked { background: #1b7ce4; border-color: #1b7ce4; }
        input:checked::after { content: ""; width: 4px; height: 8px; margin-top: -3px; border: solid #fff; border-width: 0 2px 2px 0; rotate: 45deg; }
        input:disabled { background: #efefef; border-color: #b0b0b0; }
        .part::after { content: ""; width: 10px; height: 10px; background: #93c5fb; border: 1px solid #3f93ee; }
        .foc { outline: 2px solid #777; outline-offset: -1px; }
        .scroll { flex: none; width: 15px; padding: 46px 3px 0 4px; }
        .scroll div { height: 186px; border-radius: 4px; background: #cdcdcd; }
        .foot { display: flex; justify-content: end; padding: 7px 8px 5px; }
        .foot button { width: 90px; height: 26px; border: 1px solid #c4c4c4; border-radius: 3px; }
      </style>
      <div class="tabs"><button type="button" class="on">图元显示</button><button type="button">楼层显示</button></div>
      <div class="view">
        <table><colgroup><col><col style="width: 63px"><col style="width: 63px"></colgroup>
          <tr><th>图层构件</th><th class="hot">显示图元</th><th>显示名称</th></tr>
          ${rows.map(([name, lv, s, d]) => `<tr class="${lv}">
            <td><div class="name">${lv === 'g' ? '<button type="button" aria-label="折叠">-</button>' : '<span class="tw"></span>'}${name}</div></td>
            <td${s === 'f' ? ' class="foc"' : ''}><input type="checkbox" aria-label="${name} 显示图元"${s === '1' ? ' checked' : ''}${s === 'p' ? ' class="part"' : ''}></td>
            <td><input type="checkbox" aria-label="${name} 显示名称"${d ? ' disabled' : ''}></td></tr>`).join('')}
        </table>
        <div class="scroll"><div></div></div>
      </div>
      <div class="foot"><button type="button">恢复默认设置</button></div>`;
  }
}
customElements.define('display-settings', DisplaySettings);

// ---- 3D model view ----
const PURPLE = '#8800ff', CAP = '#430080', BLUE = '#3838ff', NAVY = '#1a1a7e';
const box = (x1, y1, x2, y2, fill) => `<path fill="${fill}" d="M${x1} ${y1}H${x2}V${y2}H${x1}z"/>`;
const poly = (pts, fill, extra = '') => `<polygon points="${pts}" fill="${fill}" ${extra}/>`;
const seg = (x1, y1, x2, y2, color, w = 1) => `<path d="M${x1} ${y1}L${x2} ${y2}" stroke="${color}" stroke-width="${w}" fill="none"/>`;

// toothed column: narrow core plus wide blocks with a dark cap above each
function column(x1, n1, n2, x2, tops, yEnd, yStart) {
  let s = box(n1, yStart, n2, yEnd, PURPLE);
  for (const t of tops) {
    s += box(x1 - 1, t - 6, n1, t, CAP) + box(n2, t - 6, x2 - 1, t, CAP);
    s += box(x1, t, x2, t + 53, PURPLE);
  }
  return s;
}

function gridLines() {
  return seg(498, 374.500, 1636, 369.500, '#e80000') + seg(498, 511.500, 1216, 509, '#800000')
    + seg(498, 623, 1636, 619, '#e80000') + seg(498, 747.500, 1636, 743.500, '#e00000') + seg(498, 871.500, 1636, 867.500, '#e00000')
    + seg(1006, 703, 1460, 702, '#800000') + seg(1407, 612, 1409, 620, '#800000') + seg(1497, 735, 1498, 743, '#800000')
    + seg(498, 692.500, 1636, 689, '#00c800') + seg(498, 706, 1636, 702, '#00a800')
    + seg(708, 841, 1636, 837.500, '#00dc00') + seg(1285, 774.500, 1636, 773.500, '#00c800')
    + seg(498, 913.500, 1636, 909, '#00c800') + seg(498, 921, 1636, 916.500, '#005800') + seg(498, 926.500, 1636, 922, '#00c800') + seg(498, 970, 1636, 966, '#005800')
    + '<path fill="none" stroke="#00e000" d="M769 701l4 24M764 705.500h10M803 892l4 24M802 912.500h10M1396 698l4 25M1391 703h10M1430 889l4 25M1429 910h10M526 792l5 27 34-5-36-5M564 809l1 10"/>';
}

function backColumns() {
  let s = box(737, 166, 809, 179, PURPLE) + column(737, 751, 795, 809, [248, 354, 461], 514, 166);
  // cluster left of the main column
  s += box(902, 166, 946, 178, PURPLE) + box(916, 166, 924, 625, PURPLE) + box(924, 166, 961, 655, PURPLE) + box(924, 600, 930, 643, PURPLE);
  for (const t of [252, 359, 465, 571]) s += box(901, t - 6, 916, t, CAP) + box(902, t, 916, t === 252 ? 302 : Math.min(t + 53, 613), PURPLE);
  for (let i = 0; i < 4; i++) {
    const y = 264 + i * 106.400;
    s += box(924, y, 938, y + 6, CAP) + seg(916, y - 11, 930, y - 11, CAP) + seg(930.500, y - 48, 930.500, y, CAP) + seg(938.500, y - 48, 938.500, y, CAP)
      + seg(930.500, y - 36, 938.500, y - 36, CAP) + seg(924, y + 6, 924, y + 54, CAP) + seg(960.500, y - 29, 960.500, y + 24, CAP) + seg(916.500, y - 11, 916.500, y + 42, CAP);
  }
  // cluster at the top of the stair
  s += box(1342, 166, 1535, 178, PURPLE) + box(1342, 166, 1353, 376, PURPLE) + box(1353, 166, 1367, 405, PURPLE) + box(1367, 166, 1432, 412, PURPLE);
  s += box(1329, 215, 1342, 268, PURPLE) + box(1328, 209, 1342, 215, CAP) + box(1329, 325, 1342, 374, PURPLE);
  s += box(1432, 239, 1445, 293, PURPLE) + box(1440, 250, 1463, 300, PURPLE) + box(1432, 345, 1445, 380, PURPLE) + box(1445, 356, 1463, 380, PURPLE);
  s += box(1454, 204, 1477, 380, PURPLE) + box(1477, 166, 1522, 380, PURPLE) + box(1463, 166, 1535, 182, PURPLE) + box(1463, 257, 1535, 310, PURPLE) + box(1463, 363, 1535, 378, PURPLE);
  s += box(1362, 204, 1366, 239, '#a33dff') + box(1362, 328, 1366, 346, '#a33dff');
  for (const dy of [0, 106]) {
    s += box(1353, 239 + dy, 1367, 245 + dy, CAP) + box(1373, 233 + dy, 1386, 239 + dy, CAP) + box(1432, 233 + dy, 1445, 239 + dy, CAP) + box(1445, 244 + dy, 1454, 250 + dy, CAP)
      + box(1462, 251 + dy, 1477, 257 + dy, CAP) + box(1522, 251 + dy, 1534, 257 + dy, CAP) + box(1454, 219 + dy, 1469, 225 + dy, CAP)
      + seg(1367, 246 + dy, 1373, 246 + dy, CAP) + seg(1373.500, 245 + dy, 1373.500, 292 + dy, CAP) + seg(1469, 227 + dy, 1477, 227 + dy, CAP);
  }
  s += seg(1342.500, 204, 1342.500, 376, CAP) + seg(1353.500, 245, 1353.500, 346, CAP) + seg(1367, 204, 1367, 412, CAP) + seg(1386, 204, 1386, 234, CAP)
    + seg(1455, 225, 1455, 375, CAP) + seg(1463, 257, 1463, 375, CAP) + seg(1476.500, 204, 1476.500, 250, CAP) + seg(1342, 216, 1362, 216, CAP) + seg(1469, 204, 1469, 250, CAP);
  // lower part under the landing
  s += box(1386, 480, 1477, 612, PURPLE) + box(1373, 552, 1386, 558, CAP) + box(1374, 558, 1455, 612, PURPLE) + box(1454, 580, 1463, 623, PURPLE)
    + box(1463, 580, 1535, 629, PURPLE) + box(1477, 629, 1522, 736, PURPLE) + box(1469, 629, 1477, 682, PURPLE) + box(1470, 645, 1476, 676, NAVY)
    + box(1455, 645, 1470, 651, CAP) + box(1455, 651, 1470, 704, PURPLE) + box(1462, 676, 1477, 683, CAP) + box(1522, 676, 1534, 683, CAP) + box(1463, 683, 1535, 736, PURPLE)
    + seg(1386, 510, 1386, 558, CAP) + seg(1463, 600, 1463, 629, CAP);
  return s;
}

function landing() {
  return poly('1432,371 1636,370 1636,378 1432,378', '#156314')
    + poly('1405,375 1427,498 1427,588 1410,495 1405,425', '#115210')
    + poly('1405,375 1462,374 1482,496 1482,499 1427,499', '#156314')
    + poly('1462,378 1636,377 1636,496 1482,497', '#2d2d2d')
    + poly('1455,498 1636,495 1636,503 1455,503', '#156314')
    + seg(1434, 377.500, 1603, 377.500, '#20a020')
    + box(1427, 499, 1455, 588, '#2bdc2b') + poly('1455,503 1636,502 1636,590 1455,591', '#2bdc2b') + seg(1455, 499, 1455, 591, '#156314');
}

function stair() {
  const n = 10, x = k => 1342.400 - k * 62.800, y = k => 411.700 + k * 33.850;
  let front = '788,830 ', s = '';
  for (let k = n - 1; k >= 0; k--) {
    const fx = x(k) + 9.300, fy = y(k) + 53.400;
    front += `${fx},${k === n - 1 ? 830 : y(k + 1) + 53.400} ${fx},${fy} `;
  }
  front += '1414.500,465 1414.500,493';
  s += poly(front, '#1270ff');
  for (let k = n - 1; k >= 0; k--) {
    const a = x(k), t = y(k), fx = a + 9.300, fy = t + 53.400;
    s += poly(`${a},${t} ${fx},${fy} ${fx},${fy + 33.800} ${a},${t + 33.800}`, '#052a60');
    s += poly(`${a},${t} ${a + 62.800},${t} ${a + 72.100},${fy} ${fx},${fy}`, '#07347c');
  }
  // bottom block
  s += poly('720,743 732,810 732,899 720,830', '#052a60') + poly('720,743 777,743 788,810 732,810', '#07347c') + box(732, 810, 788, 899, '#1270ff');
  return s;
}

function balusters() {
  return [[810, 492, 724], [872.500, 458, 690], [935, 425, 656], [1060.500, 356, 588], [1123, 320, 553], [1186, 287, 519], [1249, 252, 485], [1311.500, 218, 451]]
    .map(([x, a, b]) => box(x - 2, a, x + 2, b, '#1f6fff') + seg(x - 2, a, x - 2, b, '#0f49b0')).join('');
}

function drafting() {
  let s = '<g fill="none" stroke="#e4e400">';
  s += '<path d="M686.500 743.500h91v7h-91zM709.500 867.500h90v7h-90zM1404.500 740.500h67v7h-67zM1427.500 865.500h67v6.500h-67z"/>';
  s += '<path d="M789 813.500L1416 811M799 867.500L1427 865M1412 747.500L1141 748.500 1246 772.500 1273 771.500 1236 778.500 1264 777.500 1363 801.500H1414M1153 748l1 4M1217 748l3 19M1279.500 748l6 35M1342.500 748l8.500 51"/>';
  for (let i = 0; i < 9; i++) s += `<path d="M${851.500 + i * 62.800} 813l9.500 54"/>`;
  s += '</g>';
  s += seg(722, 748, 742, 867, '#00e8f0') + seg(777.500, 748, 799, 867, '#00e8f0') + seg(1405, 747, 1427, 865, '#00e8f0') + seg(1461.500, 747, 1482, 865, '#008080')
    + seg(1472, 741, 1636, 740, '#00b8c0') + seg(1472, 747, 1636, 746, '#006468') + seg(1494, 865, 1636, 864.500, '#006468') + seg(1494, 871.500, 1636, 871, '#00b8c0')
    + seg(686, 747, 777, 746.500, '#d00000') + seg(709, 871, 799, 870.500, '#d00000');
  // annotation lines seen almost edge-on
  for (const [a, b, y] of [[746, 778, 806], [1305, 1337, 761], [1430, 1462, 804], [1065, 1097, 828], [499, 516, 800]])
    s += `<path stroke="#ddd" d="M${a} ${y}.500H${b}M${a} ${y + 2}.500H${b}M${a} ${y + 4}.500H${b}"/>`;
  s += seg(669, 841.500, 696, 841.500, '#ccc');
  return s;
}

function mainColumn() {
  return box(947, 166, 961, 175, PURPLE) + column(947, 961, 1006, 1019, [182, 288.500, 395, 501.500, 608, 714.500, 821], 874, 166);
}

function beams() {
  return poly('498,180 924,178 924,185 498,186', NAVY) + poly('498,186 938,184 938,206.500 498,207.500', BLUE)
    + poly('1019,177.500 1463,175.500 1463,183 1019,184', NAVY) + poly('1006,184 1477,182 1477,204.500 1006,206', BLUE)
    + poly('1535,175.500 1636,175 1636,181 1535,182', NAVY) + box(1522, 182, 1636, 204, BLUE);
}
function lowerBeam() {
  return poly('498,302.500 946,301.300 946,310 498,311', NAVY) + poly('498,311 961,309 961,331 498,332.500', BLUE)
    + poly('1006,301 1636,299 1636,307 1006,309', NAVY) + poly('1006,309 1636,306.500 1636,328.500 1006,331', BLUE);
}

class ModelView extends HTMLElement {
  constructor() {
    super();
    const bubble = (x, y, t) => `<polygon fill="none" stroke="#007a00" points="${[...Array(10)].map((_, i) => `${(x + 12 * Math.sin(i * Math.PI / 5)).toFixed(1)},${(y - 12 * Math.cos(i * Math.PI / 5)).toFixed(1)}`).join(' ')}"/><text x="${x}" y="${y + 6}" font-size="17" text-anchor="middle">${t}</text>`;
    // dimension texts face away from the viewer
    const flipped = (x, y, t, size = 10) => `<text transform="translate(${x} ${y}) rotate(180)" y="3" font-size="${size}" text-anchor="middle" fill="#e8e8e8" font-family="DejaVu Sans">${t}</text>`;
    const tools = ['orbit', 'view2d', 'cubeTop', '*', 'cube', '*', 'fit', 'isolate', '-', 'listEye'];
    this.attachShadow({ mode: 'open' }).innerHTML = `
      <style>${RESET}
        :host { display: block; position: relative; background: #000; overflow: hidden; min-width: 0; min-height: 0; }
        .scene { display: block; width: 100%; height: 100%; font-family: "Noto Sans", sans-serif; }
        .tools { position: absolute; top: 0; right: 0; display: flex; flex-direction: column; align-items: center; gap: 8px; width: 33px; height: 246px; padding: 12px 2px 0 0; background: #fff; border: 1px solid #d8d8d8; border-radius: 0 0 3px 3px; }
        .tools ui-icon { width: 20px; height: 20px; display: block; }
        hr { width: 23px; height: 1px; margin: 0; border: 0; background: #555; }
      </style>
      <svg class="scene" viewBox="498 166 1137 843" preserveAspectRatio="xMidYMid slice" shape-rendering="crispEdges">
        ${gridLines()}
        ${flipped(516, 711, '2480')}
        ${backColumns()}
        <path fill="rgba(160,51,255,.5)" d="M498 287H654V722H498z"/>
        <path fill="#9f33ff" d="M498 272L669 270.500V737H498V722H654V287H498z"/>
        ${seg(498, 271, 669, 270.500, '#4c1a80')}
        ${landing()}
        ${stair()}
        ${balusters()}
        ${beams()}
        ${poly('752,509 946,403 946,407 752,513', '#0b3b86')}${poly('752,512 946,406 946,419 752,525', '#1f6fff')}
        ${poly('1006,371 1370.500,172 1370.500,176 1006,375', '#0b3b86')}${poly('1006,374 1370.500,175 1370.500,187 1006,386', '#1f6fff')}
        ${lowerBeam()}
        ${drafting()}
        ${mainColumn()}
        ${flipped(1078, 695, '7800')}${flipped(1128, 708, '280X10=2800')}
        ${flipped(1164, 915, '280X10=2800')}${flipped(1120, 928, '7800')}${flipped(546, 917, '2480')}
        ${flipped(740, 746, 'TZ1', 8)}${flipped(762, 871, 'TZ1', 8)}${flipped(1440, 744, 'TZ2', 8)}${flipped(1462, 869, 'TZ2', 8)}
        <g fill="#fff">
          ${bubble(510, 374.500, 4)}${bubble(510, 623, 3)}${bubble(510, 747.500, 2)}${bubble(510, 872, 1)}${bubble(1623, 868, 1)}
          <text x="1088" y="950" font-size="17">7800</text>
        </g>
        <g fill="none" stroke="#a6a6a6" shape-rendering="auto">
          <circle cx="1066.500" cy="588" r="406"/>
          <circle cx="660" cy="588" r="29.500"/><circle cx="1473" cy="588" r="29.500"/><circle cx="1066" cy="182" r="29.500"/><circle cx="1066" cy="993.500" r="29.500"/>
        </g>
        <circle cx="548" cy="956" r="5" fill="#f00"/>
        <path fill="#0000f4" d="M546 956V942h-4l6-13 6 13h-4v14z"/>
        <path fill="#00f400" d="M546 957H530v-4l-12 6 12 6v-4h16z"/>
        <path fill="#ddd" d="M544 955h8v8h-8z"/>
        <text x="548" y="928" font-size="15" text-anchor="middle" fill="#0000f4">Z</text>
        <text x="512" y="965" font-size="16" text-anchor="middle" fill="#00f400">Y</text>
      </svg>
      <div class="tools">${tools.map(t => t === '*' ? '<ui-caret></ui-caret>' : t === '-' ? '<hr>' : `<button type="button" aria-label="${t}"><ui-icon name="${t}"></ui-icon></button>`).join('')}</div>`;
  }
}
customElements.define('model-view', ModelView);

class SplitBar extends HTMLElement {
  constructor() {
    super();
    this.attachShadow({ mode: 'open' }).innerHTML = `
      <style>
        :host { display: flex; align-items: center; background: #fff; }
        div { display: flex; align-items: center; width: 4px; height: 100px; background: #5f6775; }
        div::before { content: ""; border: 3px solid transparent; border-left: 0; border-right: 4px solid #c8ccd4; }
      </style><div></div>`;
  }
}
customElements.define('split-bar', SplitBar);

class StatusBar extends HTMLElement {
  constructor() {
    super();
    const btns = ['ortho on', 'snap on drop', 'cross dim', 'angle drop', 'dynamic on drop', 'select', 'curve'];
    this.attachShadow({ mode: 'open' }).innerHTML = `
      <style>${RESET}
        :host { display: flex; align-items: center; height: 31px; background: #fcfcfc; color: #333; }
        .info { display: grid; grid-template-columns: 263px 83px 133px 103px 103px; padding-left: 2px; white-space: pre; }
        .btns { display: flex; gap: 4px; margin-right: 5px; }
        .btns button { width: 25px; height: 25px; gap: 5px; border: 1px solid #8a8a8a; border-radius: 3px; background: #fff; }
        .btns .drop { width: 36px; }
        .btns .on { background: #d6e6fb; border-color: #1b74e4; }
        .btns .dim { border-color: #b8b8b8; margin: 0 1px; }
      </style>
      <div class="info"><span>X = -7487 Y = 16832 Z = 1885</span><span>层高:   5</span><span>标高:   -0.05~4.95</span><span>1(1)</span><span>隐藏:  4</span></div>
      <div class="btns">${btns.map(b => {
        const [n, ...c] = b.split(' ');
        return `<button type="button" class="${c.join(' ')}" aria-label="${n}"><ui-icon name="${n}"></ui-icon>${c.includes('drop') ? '<ui-caret></ui-caret>' : ''}</button>`;
      }).join('')}</div>
      <span>选择要平移的图元,右键确认</span>`;
  }
}
customElements.define('status-bar', StatusBar);

class TaskBar extends HTMLElement {
  constructor() {
    super();
    this.attachShadow({ mode: 'open' }).innerHTML = `
      <style>${RESET}
        :host { display: flex; align-items: stretch; height: 40px; background: linear-gradient(90deg, #d8d8d7, #d3d5d6 40%, #d6dce4); color: #000; }
        button { width: 49px; }
        .find { display: flex; align-items: center; gap: 12px; width: 342px; padding-left: 11px; background: #fff; border-top: 1px solid #ccc; }
        .find input { flex: 1; font-size: 14px; }
        .find input::placeholder { color: #333; opacity: 1; }
        .apps { display: flex; margin-left: 5px; }
        .apps button { width: 49px; background: linear-gradient(#e58585, #e58585) bottom / 40px 2px no-repeat; }
        .apps ui-icon { width: 24px; height: 24px; }
        .apps .on { background: linear-gradient(#e58585, #e58585) bottom / 48px 2px no-repeat, #efefef; }
        .tray { display: flex; align-items: center; gap: 9px; margin-left: auto; padding-right: 3px; }
        .clock { text-align: center; line-height: 19px; margin: 0 11px 0 4px; }
        .ime { font-size: 14px; margin: 0 2px; }
        .end { width: 1px; align-self: stretch; margin-left: 12px; background: #b4b8be; }
        .up { width: 13px; height: 13px; --line: #000; }
        .task { width: 48px; }
      </style>
      <button type="button" aria-label="开始"><ui-icon name="win"></ui-icon></button>
      <label class="find"><ui-icon name="find"></ui-icon><input type="text" aria-label="搜索" placeholder="在这里输入你要搜索的内容"></label>
      <button type="button" aria-label="Cortana"><ui-icon name="cortana"></ui-icon></button>
      <button type="button" class="task" aria-label="任务视图"><ui-icon name="taskview"></ui-icon></button>
      <div class="apps">${['cad', 'tapp', 'help', 'calc', 'edge'].map(n => `<button type="button"${n === 'tapp' ? ' class="on"' : ''} aria-label="${n}"><ui-icon name="${n}"></ui-icon></button>`).join('')}</div>
      <div class="tray">
        <ui-icon class="up" name="up"></ui-icon><ui-icon name="update"></ui-icon><ui-icon name="wifi"></ui-icon><ui-icon name="sound"></ui-icon><ui-icon name="pen"></ui-icon>
        <span class="ime">英</span>
        <div class="clock">15:27<br>2022/5/13</div>
        <ui-icon name="notice"></ui-icon><div class="end"></div>
      </div>`;
  }
}
customElements.define('task-bar', TaskBar);

class GtjApp extends HTMLElement {
  constructor() {
    super();
    this.attachShadow({ mode: 'open' }).innerHTML = `
      <style>${RESET}
        :host { display: grid; grid-template-rows: auto auto auto minmax(0, 1fr) auto auto; height: 100vh; }
        main { display: grid; grid-template-columns: 210px 284px 4px minmax(0, 1fr) 4px 281px; min-height: 0; }
        .mid { display: grid; grid-template-rows: minmax(0, 1fr) 390px 30px; padding-left: 4px; min-height: 0; }
        .mid dock-panel:first-child { margin-bottom: 4px; }
        .mid button { width: 80px; height: 24px; margin: 3px 6px; border: 1px solid #c4c4c4; border-radius: 3px; }
      </style>
      <app-header></app-header>
      <app-ribbon></app-ribbon>
      <floor-bar></floor-bar>
      <main>
        <dock-panel heading="导航栏"><nav-tree></nav-tree></dock-panel>
        <div class="mid">
          <dock-panel tabs="构件列表,图纸管理"><member-list></member-list></dock-panel>
          <dock-panel tabs="属性列表,图层管理"><prop-table></prop-table></dock-panel>
          <button type="button">参数图</button>
        </div>
        <split-bar></split-bar>
        <model-view></model-view>
        <split-bar></split-bar>
        <dock-panel heading="显示设置"><display-settings></display-settings></dock-panel>
      </main>
      <status-bar></status-bar>
      <task-bar></task-bar>`;
  }
}
customElements.define('gtj-app', GtjApp);
</script>
</body>
</html>
